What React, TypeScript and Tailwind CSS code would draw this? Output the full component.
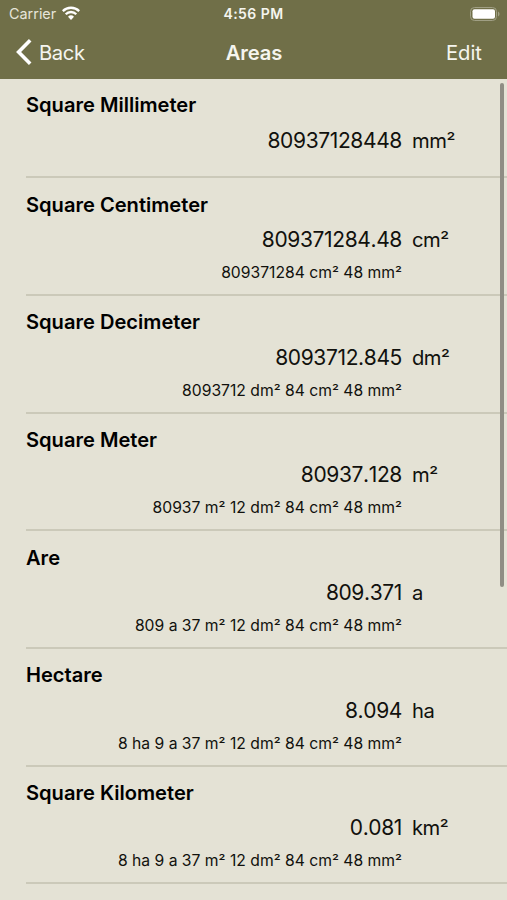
const rows = [
  { name: 'Square Millimeter', value: '80937128448', unit: 'mm²', detail: '', h: 'h-[99.3px]' },
  { name: 'Square Centimeter', value: '809371284.48', unit: 'cm²', detail: '809371284 cm² 48 mm²', h: 'h-[117.7px]' },
  { name: 'Square Decimeter', value: '8093712.845', unit: 'dm²', detail: '8093712 dm² 84 cm² 48 mm²', h: 'h-[117.7px]' },
  { name: 'Square Meter', value: '80937.128', unit: 'm²', detail: '80937 m² 12 dm² 84 cm² 48 mm²', h: 'h-[117.7px]' },
  { name: 'Are', value: '809.371', unit: 'a', detail: '809 a 37 m² 12 dm² 84 cm² 48 mm²', h: 'h-[117.7px]' },
  { name: 'Hectare', value: '8.094', unit: 'ha', detail: '8 ha 9 a 37 m² 12 dm² 84 cm² 48 mm²', h: 'h-[117.7px]' },
  { name: 'Square Kilometer', value: '0.081', unit: 'km²', detail: '8 ha 9 a 37 m² 12 dm² 84 cm² 48 mm²', h: 'h-[117.7px]' },
];

// Lowers each superscript so that its top meets the digits' cap height.
function Units({ text }: { text: string }) {
  return (
    <>
      {text.split(/(²)/).map((part, i) =>
        part === '²' ? <span key={i} className="relative top-px">²</span> : part,
      )}
    </>
  );
}

export default function App() {
  return (
    <div className="relative flex h-[900px] w-[507px] flex-col overflow-hidden bg-[#e4e2d5] font-['Inter',sans-serif] text-[#11110d]">
      <header className="h-[79px] shrink-0 bg-[#706f48] text-[#f5f5ef]">
        <div className="grid h-[27px] grid-cols-3 items-center pl-[9px] pr-[7px]">
          <div className="flex items-center gap-[6px] pt-px text-[14.4px] text-[#e6e5da]">
            Carrier
            <svg className="-mt-[2px]" width="18" height="14" viewBox="0 0 18 14" fill="none" stroke="white" strokeWidth="2.3">
              <path d="M.8 5.1a11.7 11.7 0 0 1 16.4 0M3.7 8.2a7.5 7.5 0 0 1 10.6 0" />
              <path d="M6 10.8a4.3 4.3 0 0 1 6 0L9 13.9z" fill="white" stroke="none" />
            </svg>
          </div>
          <div className="-ml-[2px] text-center text-[14px] font-semibold tracking-[0.45px]">4:56 PM</div>
          <div className="flex justify-end">
            <svg width="30" height="14" viewBox="0 0 30 14" fill="none">
              <rect x=".5" y=".5" width="26" height="13" rx="4" stroke="#a09f84" />
              <rect x="2.5" y="2.3" width="22.5" height="9.4" rx="2" fill="white" />
              <path d="M28 4.5c2 .7 2 4.3 0 5z" fill="#a09f84" />
            </svg>
          </div>
        </div>
        <nav className="grid h-[52px] grid-cols-3 items-center px-[16px] text-[20.2px]">
          <div className="flex items-center gap-[7px] tracking-[-0.35px]">
            <svg className="-mt-px" width="16" height="26" viewBox="0 0 16 26" fill="none" stroke="white" strokeWidth="3.6">
              <path d="M14.2 1.3 2.6 13l11.6 11.7" />
            </svg>
            <span>Back</span>
          </div>
          <div className="pl-px text-center font-semibold tracking-[-0.1px]">Areas</div>
          <div className="pr-[9px] text-right">Edit</div>
        </nav>
      </header>
      <main className="flex flex-col">
        {rows.map((row) => (
          <section key={row.name} className={`${row.h} ml-[26px] shrink-0 border-b-2 border-[#cbc9b9] pt-[12.4px]`}>
            <h2 className="h-[28px] text-[20.1px] font-semibold leading-[28px] text-black">{row.name}</h2>
            <div className="mt-[7px] flex h-[28px] items-center text-[21px]">
              <div className="w-[376px] text-right tracking-[-0.37px] [font-kerning:none]">{row.value}</div>
              <div className="ml-[10px] pt-px text-[20.2px] tracking-[-0.5px]"><Units text={row.unit} /></div>
            </div>
            <div className="mt-[9.3px] h-[20px] w-[376px] text-right text-[15.7px] leading-[20px]"><Units text={row.detail} /></div>
          </section>
        ))}
      </main>
      <div className="absolute right-[3px] top-[83px] h-[504px] w-[4px] rounded-full bg-[#8f8d84]" />
    </div>
  );
}
